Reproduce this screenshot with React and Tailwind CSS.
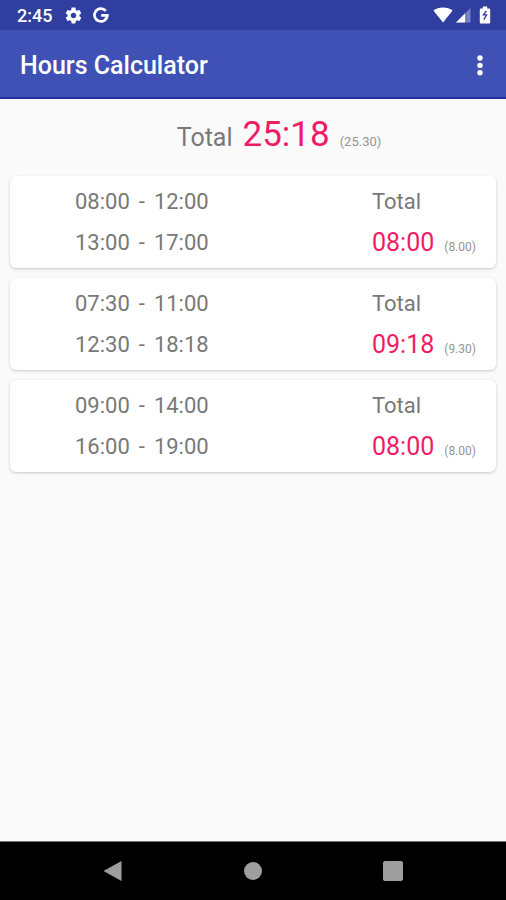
// Description: Hours Calculator home screen — status bar, app bar, grand total and one
// card per day with its time ranges and the day's total.

const DAYS = [
  { ranges: [['08:00', '12:00'], ['13:00', '17:00']], total: '08:00', decimal: '8.00' },
  { ranges: [['07:30', '11:00'], ['12:30', '18:18']], total: '09:18', decimal: '9.30' },
  { ranges: [['09:00', '14:00'], ['16:00', '19:00']], total: '08:00', decimal: '8.00' },
]

function StatusBar() {
  return (
    <div className="flex h-[30px] items-center bg-[#303f9f] pl-[17px] pr-[15px] text-white">
      <span className="pt-0.5 text-[18px] leading-5 font-medium">2:45</span>
      <svg viewBox="0 0 24 24" className="ml-3 size-[19px]" fill="currentColor" aria-hidden="true">
        <path d="M19.43 12.98c.04-.32.07-.64.07-.98s-.03-.66-.07-.98l2.11-1.65c.19-.15.24-.42.12-.64l-2-3.46c-.12-.22-.39-.3-.61-.22l-2.49 1c-.52-.4-1.08-.73-1.69-.98l-.38-2.65C14.46 2.18 14.25 2 14 2h-4c-.25 0-.46.18-.49.42l-.38 2.65c-.61.25-1.17.59-1.69.98l-2.49-1c-.23-.09-.49 0-.61.22l-2 3.46c-.13.22-.07.49.12.64l2.11 1.65c-.04.32-.07.65-.07.98s.03.66.07.98l-2.11 1.65c-.19.15-.24.42-.12.64l2 3.46c.12.22.39.3.61.22l2.49-1c.52.4 1.08.73 1.69.98l.38 2.65c.03.24.24.42.49.42h4c.25 0 .46-.18.49-.42l.38-2.65c.61-.25 1.17-.59 1.69-.98l2.49 1c.23.09.49 0 .61-.22l2-3.46c.12-.22.07-.49-.12-.64l-2.11-1.65zM12 15.5c-1.93 0-3.5-1.57-3.5-3.5s1.57-3.5 3.5-3.5 3.5 1.57 3.5 3.5-1.57 3.5-3.5 3.5z" />
      </svg>
      <svg
        viewBox="0 0 16 16"
        className="ml-2.5 size-4"
        fill="none"
        stroke="currentColor"
        strokeWidth="2.7"
        aria-hidden="true"
      >
        <path d="M12.8 3.9A6.4 6.4 0 1 0 14.3 8.4H8.2" />
      </svg>

      <div className="ml-auto flex items-center">
        <svg viewBox="0 0 20 16" className="h-4 w-5" fill="currentColor" aria-hidden="true">
          <path d="M10 15.5L0.4 3.6C3 1.5 6.3.4 10 .4s7 1.1 9.6 3.2z" />
        </svg>
        <svg viewBox="0 0 16 16" className="ml-0.5 size-4" fill="currentColor" aria-hidden="true">
          <path d="M15.5 1v14.5H1z" opacity=".35" />
          <path d="M10 6.5v9H1z" />
        </svg>
        <svg viewBox="0 0 12 18" className="ml-2 h-[18px] w-3" aria-hidden="true">
          <path
            d="M3.8 0.5h4.4v2h2.1c.5 0 .9.4.9.9v13c0 .6-.4 1-.9 1H1.7c-.5 0-.9-.4-.9-1v-13c0-.5.4-.9.9-.9h2.1z"
            fill="currentColor"
          />
          <path d="M7.4 5L4.4 8.8h3.2L4.8 13.6" fill="none" stroke="#303f9f" strokeWidth="1.3" />
        </svg>
      </div>
    </div>
  )
}

function AppBar() {
  return (
    <header className="flex h-[69px] items-center justify-between border-b-2 border-[#1f2fa3] bg-[#3f51b5] pl-5 pr-3 pt-1 text-white">
      <h1 className="text-[25px] leading-8 font-medium">Hours Calculator</h1>
      <button type="button" aria-label="More options" className="flex w-7 justify-center">
        <svg viewBox="0 0 6 22" className="h-[22px] w-1.5" fill="currentColor">
          <circle cx="3" cy="3" r="2.7" />
          <circle cx="3" cy="10.4" r="2.7" />
          <circle cx="3" cy="17.8" r="2.7" />
        </svg>
      </button>
    </header>
  )
}

function DayCard({ day }) {
  return (
    <li className="flex h-[92px] justify-between rounded-md bg-white pl-[65px] text-[22px] leading-[41px] shadow-[0_1px_3px_rgba(0,0,0,0.2)]">
      <div className="pt-[5px]">
        {day.ranges.map(([from, to]) => (
          <p key={from} className="flex gap-[9px]">
            <span>{from}</span>
            <span>-</span>
            <span>{to}</span>
          </p>
        ))}
      </div>
      <div className="w-[124px] pt-[5px]">
        <p>Total</p>
        <p className="flex items-baseline gap-2.5">
          <span className="text-[25px] text-[#ee1c66]">{day.total}</span>
          <span className="text-[12px] text-[#949494]">({day.decimal})</span>
        </p>
      </div>
    </li>
  )
}

function NavBar() {
  return (
    <nav className="flex h-[59px] items-center justify-center gap-[100px] border-t border-[#777] bg-black text-[#9e9e9e]">
      <button type="button" aria-label="Back" className="flex w-10 justify-center">
        <svg viewBox="0 0 20 22" className="h-[22px] w-5" fill="currentColor">
          <path d="M18.5 1v20L0.5 11z" />
        </svg>
      </button>
      <button type="button" aria-label="Home" className="flex w-10 justify-center">
        <span className="size-[18px] rounded-full bg-[#9e9e9e]" />
      </button>
      <button type="button" aria-label="Recent apps" className="flex w-10 justify-center">
        <span className="size-5 rounded-xs bg-[#9e9e9e]" />
      </button>
    </nav>
  )
}

export default function App() {
  return (
    <div className="flex min-h-screen flex-col bg-[#fafafa] font-['Roboto',sans-serif] text-[#787878]">
      <StatusBar />
      <AppBar />

      <main className="flex-1 px-2.5">
        {/* Grand total */}
        <p className="flex h-[77px] items-baseline justify-center gap-2.5 pt-[15px] pl-[52px] leading-[41px]">
          <span className="text-[25px]">Total</span>
          <span className="text-[35px] text-[#ee1c66]">25:18</span>
          <span className="text-[13px] text-[#949494]">(25.30)</span>
        </p>

        <ul className="flex flex-col gap-2.5">
          {DAYS.map((day, i) => (
            <DayCard key={i} day={day} />
          ))}
        </ul>
      </main>

      <NavBar />
    </div>
  )
}
